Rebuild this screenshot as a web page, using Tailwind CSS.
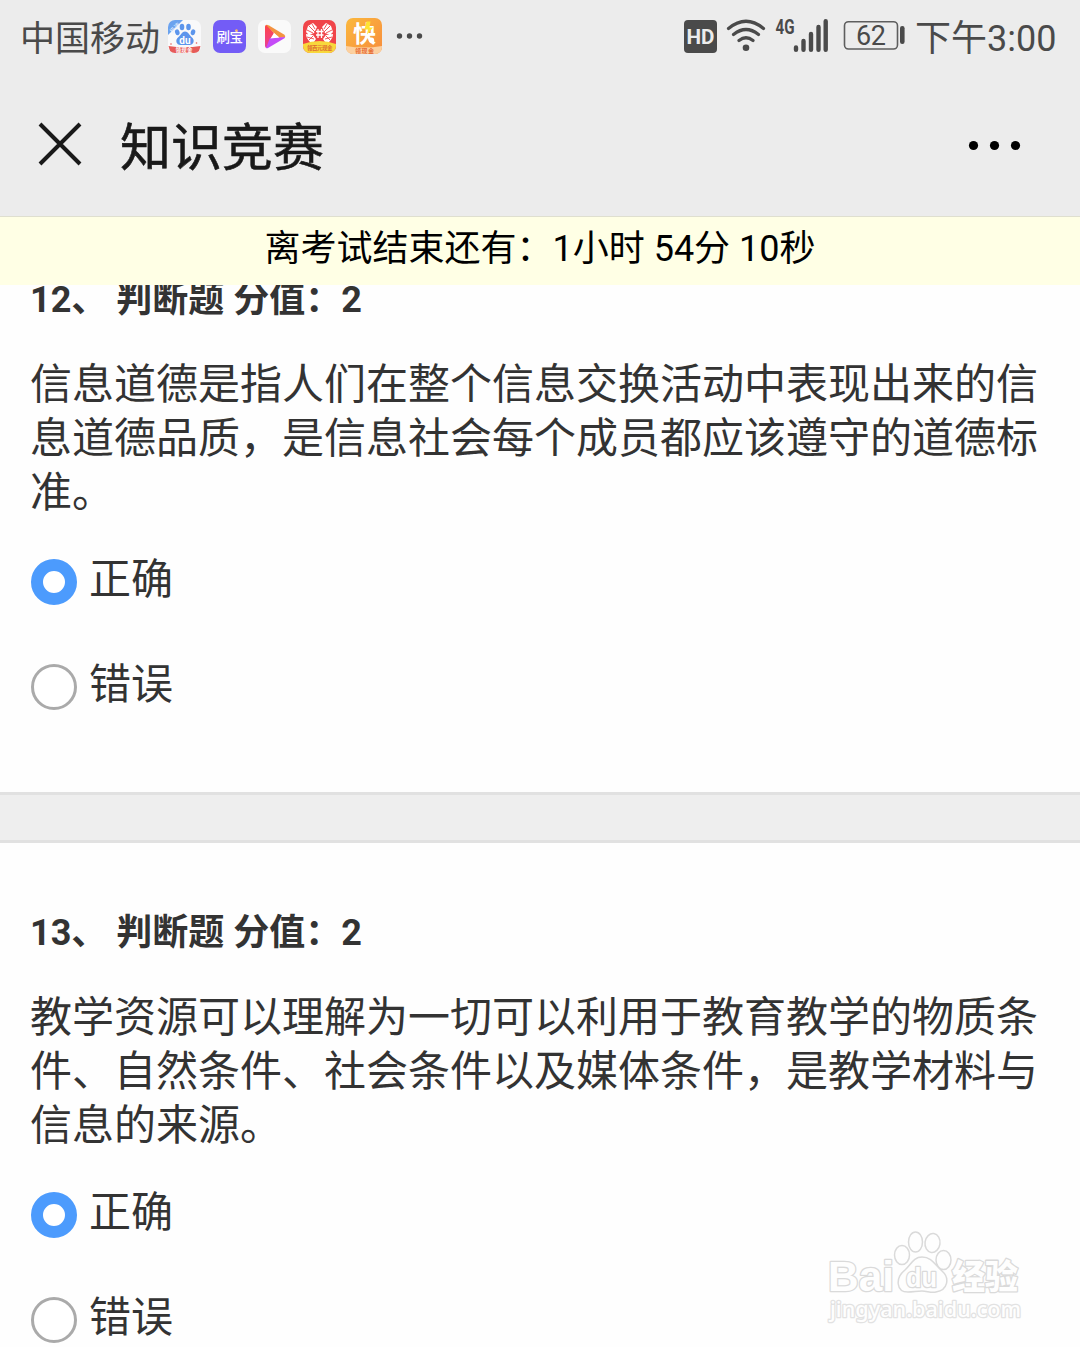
<!DOCTYPE html>
<html lang="zh-CN">
<head>
<meta charset="utf-8">
<title>知识竞赛</title>
<script src="https://cdn.jsdelivr.net/npm/@tailwindcss/browser@4"></script>
</head>
<body class="bg-[#fefefe]">
<div class="relative flex h-[1347px] w-[1080px] flex-col overflow-hidden bg-[#fefefe] font-['Roboto','Noto_Sans_CJK_SC',sans-serif] text-[#333]">
  <header class="relative z-10 h-[217px] shrink-0 border-b border-[#dfdfcf] bg-[#ececec]">
    <div class="flex h-[74px] items-start text-[#4a4a4a]">
      <span class="ml-[20px] mt-[13px] w-[141px] whitespace-nowrap text-[35px] leading-[54px]">中国移动</span>
      <svg class="ml-[5px] mt-[17px] h-[38px] w-[260px] shrink-0" viewBox="166 17 260 38">
        <defs>
          <clipPath id="a"><rect x="168" y="20" width="33" height="33" rx="7"/></clipPath>
          <clipPath id="b"><rect x="303" y="20" width="33" height="33" rx="7"/></clipPath>
          <clipPath id="c"><rect x="346" y="18" width="36" height="36" rx="7"/></clipPath>
          <linearGradient id="o" x2="1" y2="1"><stop stop-color="#fbb83d"/><stop offset="1" stop-color="#f78c3d"/></linearGradient>
          <linearGradient id="r" x2="0" y2="1"><stop stop-color="#ff4545"/><stop offset="1" stop-color="#e8409a"/></linearGradient>
        </defs>
        <g clip-path="url(#a)">
          <path fill="#f9f9fa" d="M168 20h33v33h-33z"/>
          <path fill="#6ba2ee" d="M168 20h15l-15 15z"/>
          <text x="-6" y="2" font-size="6" fill="#e7f0ff" transform="translate(175 28) rotate(-45)">极速</text>
          <g fill="#5c95ec"><ellipse cx="177.300" cy="32.300" rx="2.200" ry="3" transform="rotate(-18 177.300 32.300)"/><ellipse cx="182" cy="27" rx="2.300" ry="3.200"/><ellipse cx="188.500" cy="27" rx="2.300" ry="3.200"/><ellipse cx="193" cy="32.300" rx="2.200" ry="3" transform="rotate(18 193 32.300)"/><path d="M185 31.500c3 0 4.500 3.500 6.500 5.500 4 3 2 8-2 8h-9c-4 0-6-5-2-8 2.500-2 3.500-5.500 6.500-5.500z"/></g>
          <text x="179.300" y="43.500" font-size="10" font-weight="700" fill="#fff">du</text>
          <path fill="#e65b59" d="M168.500 46q16 2.500 32 0l-2 7h-28z"/><circle cx="171" cy="44" r=".8" fill="#e65b59"/><circle cx="196.500" cy="43" r=".8" fill="#e65b59"/>
          <text x="175.500" y="51.500" font-size="5.500" font-weight="700" fill="#fff" textLength="17">领现金</text>
        </g>
        <rect x="213" y="20" width="33" height="33" rx="7" fill="#735cf6"/>
        <text x="216.500" y="41.800" font-size="13.500" font-weight="500" fill="#fff" textLength="26.500">刷宝</text>
        <circle cx="236.500" cy="30.500" r="1.200" fill="#ffb85c"/>
        <rect x="258" y="20" width="33" height="33" rx="7" fill="#fafafa"/>
        <path fill="url(#r)" d="M265 26.500q0-2 2-1.500l7 8-7 15q-2 0-2-2z"/>
        <path fill="#f39340" d="M266 25q1-.5 3 .5l15 9q2 1.500 1 2.500l-6 1z"/>
        <path fill="#c44bf7" d="M266 48l4-10 15-1q0 1-1 1.500L268 48q-1 .5-2 0z"/>
        <path fill="#fff" d="M274 33l5.500 4.500-9 1z"/>
        <g clip-path="url(#b)">
          <path fill="#f04449" d="M303 20h33v33h-33z"/>
          <g fill="#fff"><path d="M313 23l4 4-3 6-5 2-3-3 2-6zM326 23l-4 4 3 6 5 2 3-3-2-6zM306 34l7 1 3 4-2 3h-4q-4-4-4-8zM333 34l-7 1-3 4 2 3h4q4-4 4-8z"/></g>
          <g stroke="#f04449" stroke-width=".9" fill="none"><path d="M309 26l6 6M312 24l3 5M307 30l6 3M330 26l-6 6M327 24l-3 5M332 30l-6 3M307 37l7 2M309 40l4-4M332 37l-7 2M330 40l-4-4"/></g>
          <path stroke="#fff" stroke-width="1.300" d="M316 31.500h7.500M316 35h7.500M318 29v9M321.500 29v9"/>
          <path fill="#f8d83c" d="M303 44q16.500-6 33 0v9h-33z"/>
          <text x="307" y="50" font-size="5.500" font-weight="700" fill="#de6b31" textLength="25.500">领百元现金</text>
        </g>
        <g clip-path="url(#c)">
          <path fill="url(#o)" d="M346 18h36v36h-36z"/>
          <text x="353" y="41.500" font-size="23" font-weight="700" fill="#fff">快</text>
          <path fill="#ffe332" d="M366.500 21.500h4l-1 6h3.500l-6 7 1-5h-3.500z"/>
          <circle cx="371.500" cy="40.300" r="2.700" fill="#fff"/>
          <path fill="#fcd0a0" d="M346 46q18 3 36 0v8h-36z"/>
          <text x="355" y="52.800" font-size="6" font-weight="700" fill="#e76c35" textLength="19">领现金</text>
        </g>
        <g fill="#4a4a4a"><circle cx="399.500" cy="36" r="2.700"/><circle cx="409.500" cy="36" r="2.700"/><circle cx="419.500" cy="36" r="2.700"/></g>
      </svg>
      <svg class="ml-[254px] mt-[17px] h-[38px] w-[230px] shrink-0" viewBox="680 17 230 38">
        <rect x="684" y="20" width="33" height="33" rx="4" fill="#4a4a4a"/>
        <text x="686.500" y="44" font-size="21" font-weight="700" fill="#ececec" textLength="28" lengthAdjust="spacingAndGlyphs">HD</text>
        <g fill="none" stroke="#4a4a4a" stroke-width="3.200" stroke-linecap="round"><path d="M728.500 28.500q17.500-14.500 35 0M733.500 34.500q12.500-10 25 0M739 40.500q7-5.500 14 0"/></g>
        <circle cx="746" cy="47.800" r="3.300" fill="#4a4a4a"/>
        <text x="775.500" y="33.500" font-size="20" font-weight="700" fill="#4a4a4a" textLength="19" lengthAdjust="spacingAndGlyphs">4G</text>
        <g stroke="#4a4a4a" stroke-width="4.400" stroke-linecap="round"><path d="M796 47.500v2.300M803.500 41v8.800M811 34v15.800M818.500 27v22.800M825.700 21.200v28.600"/></g>
        <rect x="844.500" y="21.700" width="53" height="27.300" rx="4" fill="none" stroke="#5e5e5e" stroke-width="1.600"/>
        <text x="856" y="45" font-size="27" fill="#4a4a4a" textLength="30">62</text>
        <rect x="900" y="26" width="4.600" height="18" rx="2.200" fill="#4a4a4a"/>
      </svg>
      <span class="ml-[5px] mt-[12px] whitespace-nowrap text-[36px] leading-[54px]">下午3:00</span>
    </div>
    <div class="flex h-[142px] items-start">
      <svg class="ml-[36px] mt-[46px] size-12" viewBox="0 0 48 48" fill="none" stroke="#191919" stroke-width="4"><path d="M4 4l40 40M44 4L4 44"/></svg>
      <h1 class="ml-9 mt-[39px] text-[51px] font-normal leading-[72px] text-[#191919] [-webkit-text-stroke:0.6px_#191919]">知识竞赛</h1>
      <svg class="ml-auto mr-[58px] mt-[66px] h-3 w-[54px]" viewBox="0 0 54 12"><circle cx="5.500" cy="5.500" r="4.600"/><circle cx="26.500" cy="5.500" r="4.600"/><circle cx="47.500" cy="5.500" r="4.600"/></svg>
    </div>
  </header>
  <div class="relative z-10 h-[68px] shrink-0 bg-[#ffffe5] pt-[5px] text-center text-[36px] leading-[54px] text-black">离考试结束还有：1小时 54分 10秒</div>
  <main class="-mt-[75px] shrink-0">
    <section class="px-[30px] pb-[80px] pt-[63px]">
      <h2 class="text-[36px] font-bold leading-[54px]">12、 判断题 分值：2</h2>
      <p class="mt-[31px] w-[1010px] text-[42px] leading-[54px]">信息道德是指人们在整个信息交换活动中表现出来的信<br>息道德品质，是信息社会每个成员都应该遵守的道德标<br>准。</p>
      <div class="mt-[33px] flex h-[54px]"><span class="ml-px mt-[6px] size-[46px] rounded-full border-[12px] border-[#4c9bfd] bg-white"></span><span class="ml-[12px] text-[42px] leading-[54px]">正确</span></div>
      <div class="mt-[51px] flex h-[54px]"><span class="ml-px mt-[6px] size-[46px] rounded-full border-[3px] border-[#aaa] bg-white"></span><span class="ml-[12px] text-[42px] leading-[54px]">错误</span></div>
    </section>
    <div class="h-[51px] border-y-[3px] border-[#e1e1e1] bg-[#eee]"></div>
    <section class="px-[30px] pb-[80px] pt-[63px]">
      <h2 class="text-[36px] font-bold leading-[54px]">13、 判断题 分值：2</h2>
      <p class="mt-[31px] w-[1010px] text-[42px] leading-[54px]">教学资源可以理解为一切可以利用于教育教学的物质条<br>件、自然条件、社会条件以及媒体条件，是教学材料与<br>信息的来源。</p>
      <div class="mt-[33px] flex h-[54px]"><span class="ml-px mt-[6px] size-[46px] rounded-full border-[12px] border-[#4c9bfd] bg-white"></span><span class="ml-[12px] text-[42px] leading-[54px]">正确</span></div>
      <div class="mt-[51px] flex h-[54px]"><span class="ml-px mt-[6px] size-[46px] rounded-full border-[3px] border-[#aaa] bg-white"></span><span class="ml-[12px] text-[42px] leading-[54px]">错误</span></div>
    </section>
  </main>
  <svg class="absolute left-[810px] top-[1210px] h-[137px] w-[240px]" viewBox="0 0 240 137" fill="#fefefe" stroke="#dadada" stroke-width="1.500" stroke-linejoin="round">
    <g paint-order="stroke" stroke-width="2.600">
      <text x="18" y="81" font-family="Liberation Sans" font-size="43" font-weight="700" textLength="66" lengthAdjust="spacingAndGlyphs">Bai</text>
      <text x="142" y="79" font-size="34" font-weight="900" textLength="66" lengthAdjust="spacingAndGlyphs">经验</text>
      <text x="20" y="107" stroke="#e2e2e2" font-family="Noto Sans" font-size="22" font-weight="500" textLength="191" lengthAdjust="spacingAndGlyphs">jingyan.baidu.com</text>
    </g>
    <ellipse cx="92" cy="45" rx="7.500" ry="9.500"/><ellipse cx="105.500" cy="32" rx="7" ry="10"/><ellipse cx="122.500" cy="33" rx="7.500" ry="9.500" transform="rotate(8 122.500 33)"/><ellipse cx="133.500" cy="50" rx="7.500" ry="9.500"/>
    <path d="M112 47c-9 0-11 8-17 13-10 8-9 22 3 22 5 0 9-1 14-1s9 2 14 1c12-2 14-14 6-21-7-6-10-14-20-14z"/>
    <text x="96" y="77" paint-order="stroke" stroke-width="2.600" font-family="Liberation Sans" font-size="27" font-weight="700" textLength="31" lengthAdjust="spacingAndGlyphs">du</text>
  </svg>
</div>
</body>
</html>
